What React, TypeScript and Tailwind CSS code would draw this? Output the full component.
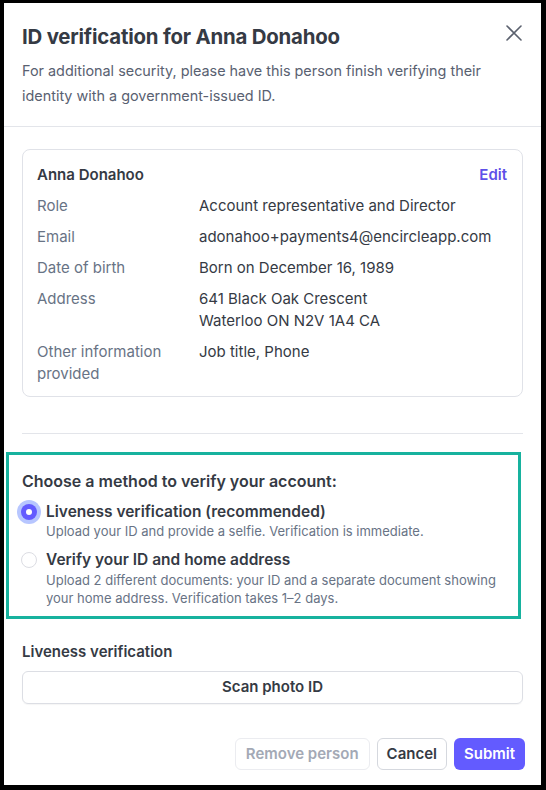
const rows: { label: string; value: string[] }[] = [
  { label: 'Role', value: ['Account representative and Director'] },
  { label: 'Email', value: ['adonahoo+payments4@encircleapp.com'] },
  { label: 'Date of birth', value: ['Born on December 16, 1989'] },
  { label: 'Address', value: ['641 Black Oak Crescent', 'Waterloo ON N2V 1A4 CA'] },
  { label: 'Other information provided', value: ['Job title, Phone'] },
]

function Radio({ checked }: { checked: boolean }) {
  if (checked) {
    return (
      <div className="w-[16px] h-[16px] rounded-full bg-[#635bff] flex items-center justify-center shadow-[0_0_0_4px_#b7c6ff]">
        <div className="w-[6px] h-[6px] rounded-full bg-white" />
      </div>
    )
  }
  return <div className="w-[16px] h-[16px] rounded-full border border-[#dcdde3] bg-white" />
}

export default function App() {
  return (
    <div
      className="w-[546px] h-[790px] bg-black pt-[3px] pl-[4px] pr-[5px] pb-[5px]"
      style={{ fontFamily: 'Inter, "Noto Sans", sans-serif' }}
    >
      <div className="bg-white h-full flex flex-col text-[#353a44]">
        {/* header */}
        <div className="px-[18px] pt-[20px] pb-[18px] border-b border-[#e3e5ea]">
          <div className="flex items-start justify-between">
            <h1 className="text-[20.4px] leading-[28px] font-bold tracking-[-0.2px] text-[#353a44]">
              ID verification for Anna Donahoo
            </h1>
            <svg width="16" height="16" viewBox="0 0 16 16" className="mt-[2px] mr-[1px] text-[#5b616e]">
              <path d="M1 1L15 15M15 1L1 15" stroke="currentColor" strokeWidth="1.6" strokeLinecap="round" />
            </svg>
          </div>
          <p className="mt-[7px] text-[14.4px] leading-[25px] text-[#596171]">
            For additional security, please have this person finish verifying their identity with a government-issued ID.
          </p>
        </div>

        <div className="px-[18px] pt-[22px] flex flex-col flex-1">
          {/* person card */}
          <div className="border border-[#e0e2e8] rounded-[8px] px-[14px] pt-[14px] pb-[11px] text-[15px] leading-[22px]">
            <div className="flex justify-between">
              <span className="font-semibold">Anna Donahoo</span>
              <span className="font-semibold text-[#5e50e8] mr-[1px]">Edit</span>
            </div>
            {rows.map((r) => (
              <div key={r.label} className="flex mt-[9px]">
                <div className="w-[162px] shrink-0 text-[#687385] pr-[12px]">{r.label}</div>
                <div className="text-[#353a44]">
                  {r.value.map((v) => (
                    <div key={v}>{v}</div>
                  ))}
                </div>
              </div>
            ))}
          </div>

          <div className="mt-[36px] h-px bg-[#e3e5ea]" />

          {/* method selection (annotated) */}
          <div className="mt-[18px] ml-[-16px] w-[515px] border-[3px] border-[#17b29e] pl-[13px] pr-[8px] pt-[15px] pb-[9px]">
            <div className="text-[16px] leading-[22px] font-semibold">Choose a method to verify your account:</div>
            <div className="flex mt-[9px] ml-[-1px]">
              <div className="w-[25px] shrink-0 pt-[3px]">
                <Radio checked />
              </div>
              <div>
                <div className="text-[15.5px] leading-[22px] font-semibold">Liveness verification (recommended)</div>
                <div className="text-[13px] leading-[17px] text-[#687385]">
                  Upload your ID and provide a selfie. Verification is immediate.
                </div>
              </div>
            </div>
            <div className="flex mt-[9px] ml-[-1px]">
              <div className="w-[25px] shrink-0 pt-[3px]">
                <Radio checked={false} />
              </div>
              <div>
                <div className="text-[15.5px] leading-[22px] font-semibold">Verify your ID and home address</div>
                <div className="text-[13px] leading-[18px] text-[#687385] pr-[10px]">
                  Upload 2 different documents: your ID and a separate document showing your home address. Verification takes 1–2 days.
                </div>
              </div>
            </div>
          </div>

          <div className="mt-[22px] text-[15px] leading-[22px] font-semibold">Liveness verification</div>
          <button className="mt-[8px] h-[33px] w-full border border-[#dcdee4] rounded-[6px] text-[15px] font-semibold text-[#353a44] shadow-[0_1px_1px_rgba(0,0,0,0.04)]">
            Scan photo ID
          </button>

          <div className="mt-auto pb-[15px] flex justify-end gap-[7px] mr-[-2px]">
            <button className="h-[32px] px-[10px] border border-[#ebecf0] rounded-[6px] text-[15px] font-semibold text-[#a3a9b5]">
              Remove person
            </button>
            <button className="h-[32px] px-[9px] border border-[#d5d8de] rounded-[6px] text-[15px] font-semibold text-[#353a44]">
              Cancel
            </button>
            <button className="h-[32px] px-[10px] rounded-[6px] bg-[#635bff] text-[15px] font-semibold text-white">
              Submit
            </button>
          </div>
        </div>
      </div>
    </div>
  )
}
